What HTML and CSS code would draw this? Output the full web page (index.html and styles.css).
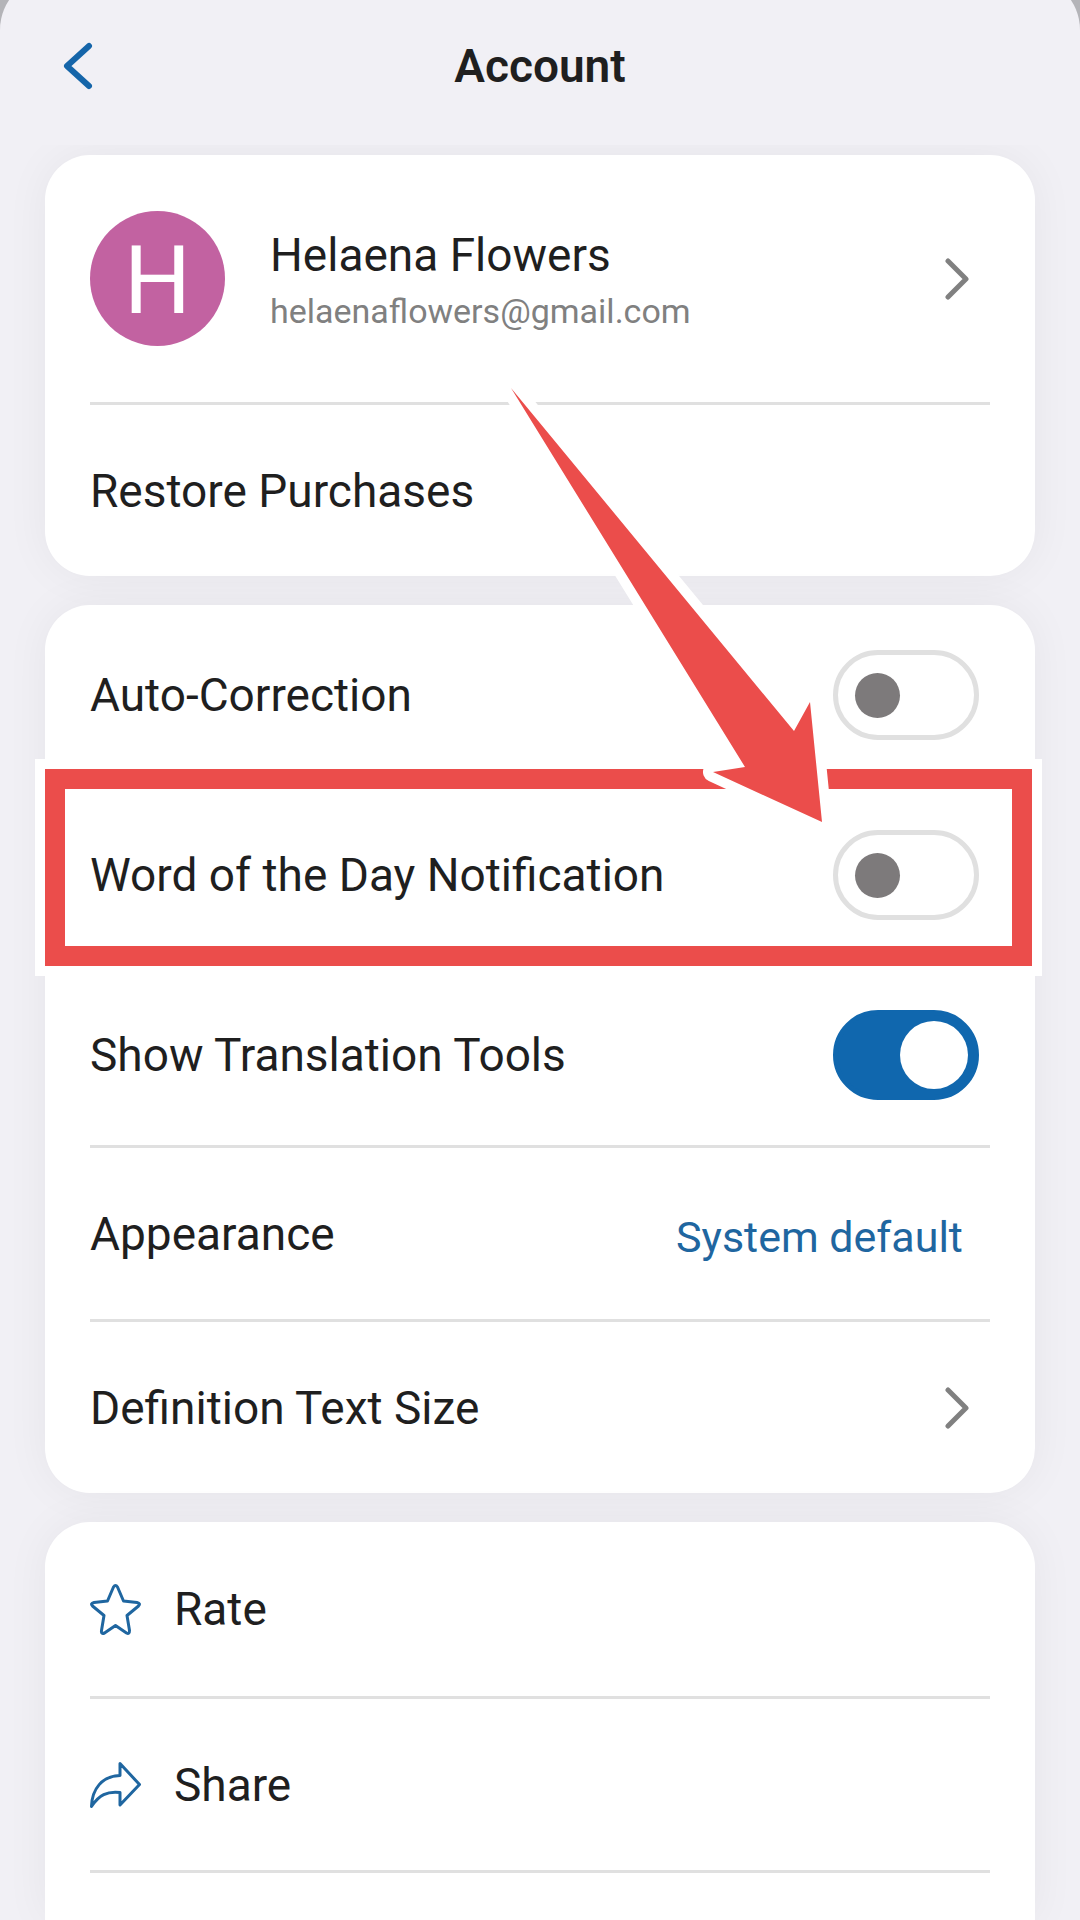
FILE: index.html
```html
<!DOCTYPE html>
<html lang="en">
<head>
  <meta charset="UTF-8" />
  <meta name="viewport" content="width=device-width, initial-scale=1.0" />
  <title>Account</title>
  <link rel="stylesheet" href="styles.css">
</head>
<body>
  <div class="sheet">
    <header class="header">
      <button type="button" class="back-button" aria-label="Back">
        <svg width="30" height="48" viewBox="0 0 30 48"><path d="M26 4L4 24L26 44" /></svg>
      </button>
      <h1 class="title">Account</h1>
    </header>

    <main class="content">
      <!-- Profile -->
      <section class="card">
        <a href="#profile" class="row profile">
          <span class="avatar">H</span>
          <span class="profile-text">
            <span class="profile-name">Helaena Flowers</span>
            <span class="profile-email">helaenaflowers@gmail.com</span>
          </span>
          <svg class="chevron" width="24" height="42" viewBox="0 0 24 42"><path d="M3 3L21 21L3 39" /></svg>
        </a>
        <button type="button" class="row">Restore Purchases</button>
      </section>

      <!-- Settings -->
      <section class="card">
        <div class="row switch-row">
          <label for="auto-correction">Auto-Correction</label>
          <input type="checkbox" id="auto-correction" class="switch" />
        </div>
        <div class="row switch-row">
          <label for="word-notification">Word of the Day Notification</label>
          <input type="checkbox" id="word-notification" class="switch" />
          <div class="highlight"></div>
          <svg class="pointer" width="360" height="470" viewBox="0 0 360 470">
            <path d="M21 18L304 361L320 332L332 452L223 402L255 397Z" />
          </svg>
        </div>
        <div class="row switch-row">
          <label for="translation-tools">Show Translation Tools</label>
          <input type="checkbox" id="translation-tools" class="switch" checked />
        </div>
        <div class="row">
          <label for="appearance">Appearance</label>
          <select id="appearance" class="appearance-select">
            <option>System default</option>
          </select>
        </div>
        <a href="#text-size" class="row">
          Definition Text Size
          <svg class="chevron" width="24" height="42" viewBox="0 0 24 42"><path d="M3 3L21 21L3 39" /></svg>
        </a>
      </section>

      <!-- Links -->
      <section class="card card-last">
        <a href="#rate" class="row link-row">
          <svg class="icon icon-star" width="51" height="51" viewBox="0 0 51 51">
            <path d="M23.500 3Q25.500 0 27.500 3L33.500 17L47 18.500Q51 19.500 48.500 22L37 31.500L39.500 46.500Q39.500 50.500 36.500 49L25.500 41.500L14.500 49Q11 50.500 11.500 46.500L14 31.500L2.500 22Q0 19.500 4 18.500L17.500 17Z" />
          </svg>
          Rate
        </a>
        <a href="#share" class="row link-row">
          <svg class="icon icon-share" width="51" height="48" viewBox="0 0 51 48">
            <path d="M1.500 45.500C2 28 12 15 30 14.500V2.500L49.500 23.500L30 44V31.500C17 30 9 34 1.500 45.500Z" />
          </svg>
          Share
        </a>
        <div class="divider"></div>
      </section>
    </main>
  </div>
</body>
</html>
```

FILE: styles.css
```css
* {
  box-sizing: border-box;
}

body {
  margin: 0;
  height: 100vh;
  overflow: hidden;
  background-color: #b4b4b8;
  font-family: Roboto, "Liberation Sans", sans-serif;
  font-size: 46px;
  line-height: 56px;
  color: #1f1f1f;
}

.sheet {
  display: flex;
  flex-direction: column;
  height: calc(100vh + 24px);
  margin-top: -24px;
  padding-top: 24px;
  background-color: #f1f0f5;
  border-radius: 54px 54px 0 0;
}

/* Header */
.header {
  display: grid;
  grid-template-columns: 1fr auto 1fr;
  align-items: center;
  height: 145px;
  padding: 0 63px 14px;
}

.back-button {
  justify-self: start;
  display: flex;
  padding: 0;
  border: none;
  background: none;
  cursor: pointer;
}

.back-button path {
  fill: none;
  stroke: #1565a9;
  stroke-width: 6;
  stroke-linecap: round;
  stroke-linejoin: round;
}

.title {
  margin: 0;
  font-size: 46px;
  font-weight: 600;
}

/* Cards */
.content {
  flex: 1;
  display: flex;
  flex-direction: column;
  gap: 29px;
  padding: 10px 45px 0;
  overflow: hidden;
}

.card {
  padding: 0 45px;
  background-color: #fff;
  border-radius: 45px;
  box-shadow: 0 0 45px rgba(0, 0, 0, 0.05);
}

.card-last {
  flex: 1;
  border-radius: 45px 45px 0 0;
}

.row {
  position: relative;
  display: flex;
  align-items: center;
  justify-content: space-between;
  width: 100%;
  min-height: 174px;
  padding: 0;
  border: none;
  background: none;
  font: inherit;
  color: inherit;
  text-align: left;
  text-decoration: none;
}

.row + .row {
  border-top: 3px solid #e0e0e0;
}

.divider {
  height: 3px;
  background-color: #e0e0e0;
}

/* Profile */
.profile {
  gap: 45px;
  min-height: 247px;
}

.avatar {
  width: 135px;
  height: 135px;
  padding-top: 3px;
  border-radius: 50%;
  background-color: #c262a1;
  color: #fff;
  font-size: 94px;
  line-height: 135px;
  text-align: center;
}

.profile-text {
  flex: 1;
  display: flex;
  flex-direction: column;
  padding-top: 9px;
}

.profile-email {
  font-size: 34px;
  color: #808080;
}

.chevron {
  margin-right: 21px;
}

.chevron path {
  fill: none;
  stroke: #808080;
  stroke-width: 5;
  stroke-linecap: round;
  stroke-linejoin: round;
}

/* Switches */
.switch-row {
  padding: 45px 11px 45px 0;
}

.switch-row + .switch-row {
  padding-top: 42px;
}

.switch {
  appearance: none;
  display: flex;
  align-items: center;
  width: 146px;
  height: 90px;
  margin: 0;
  padding-left: 17px;
  border: 5px solid #e0e0e0;
  border-radius: 45px;
  background-color: #fff;
  cursor: pointer;
}

.switch::before {
  content: "";
  width: 45px;
  height: 45px;
  border-radius: 50%;
  background-color: #7d7a7b;
}

.switch:checked {
  justify-content: flex-end;
  padding: 0 6px;
  border-color: #1067ae;
  background-color: #1067ae;
}

.switch:checked::before {
  width: 68px;
  height: 68px;
  background-color: #fff;
}

.appearance-select {
  appearance: none;
  margin-right: 27px;
  padding: 6px 0 0;
  border: none;
  background: none;
  font: inherit;
  font-size: 43px;
  color: #1f66a0;
}

/* Highlighted row */
.highlight {
  position: absolute;
  top: -19px;
  right: -42px;
  bottom: -1px;
  left: -45px;
  border: 20px solid #eb4d4b;
  box-shadow: 0 0 0 10px #fff;
  z-index: 1;
  pointer-events: none;
}

.pointer {
  position: absolute;
  top: -418px;
  right: 140px;
  z-index: 2;
  pointer-events: none;
}

.pointer path {
  fill: #eb4d4b;
  stroke: #fff;
  stroke-width: 20;
  stroke-linejoin: round;
  paint-order: stroke;
}

/* Link rows */
.link-row {
  justify-content: flex-start;
  gap: 33px;
}

.icon {
  fill: none;
  stroke: #1f66a0;
  stroke-width: 3;
  stroke-linejoin: round;
}
```
